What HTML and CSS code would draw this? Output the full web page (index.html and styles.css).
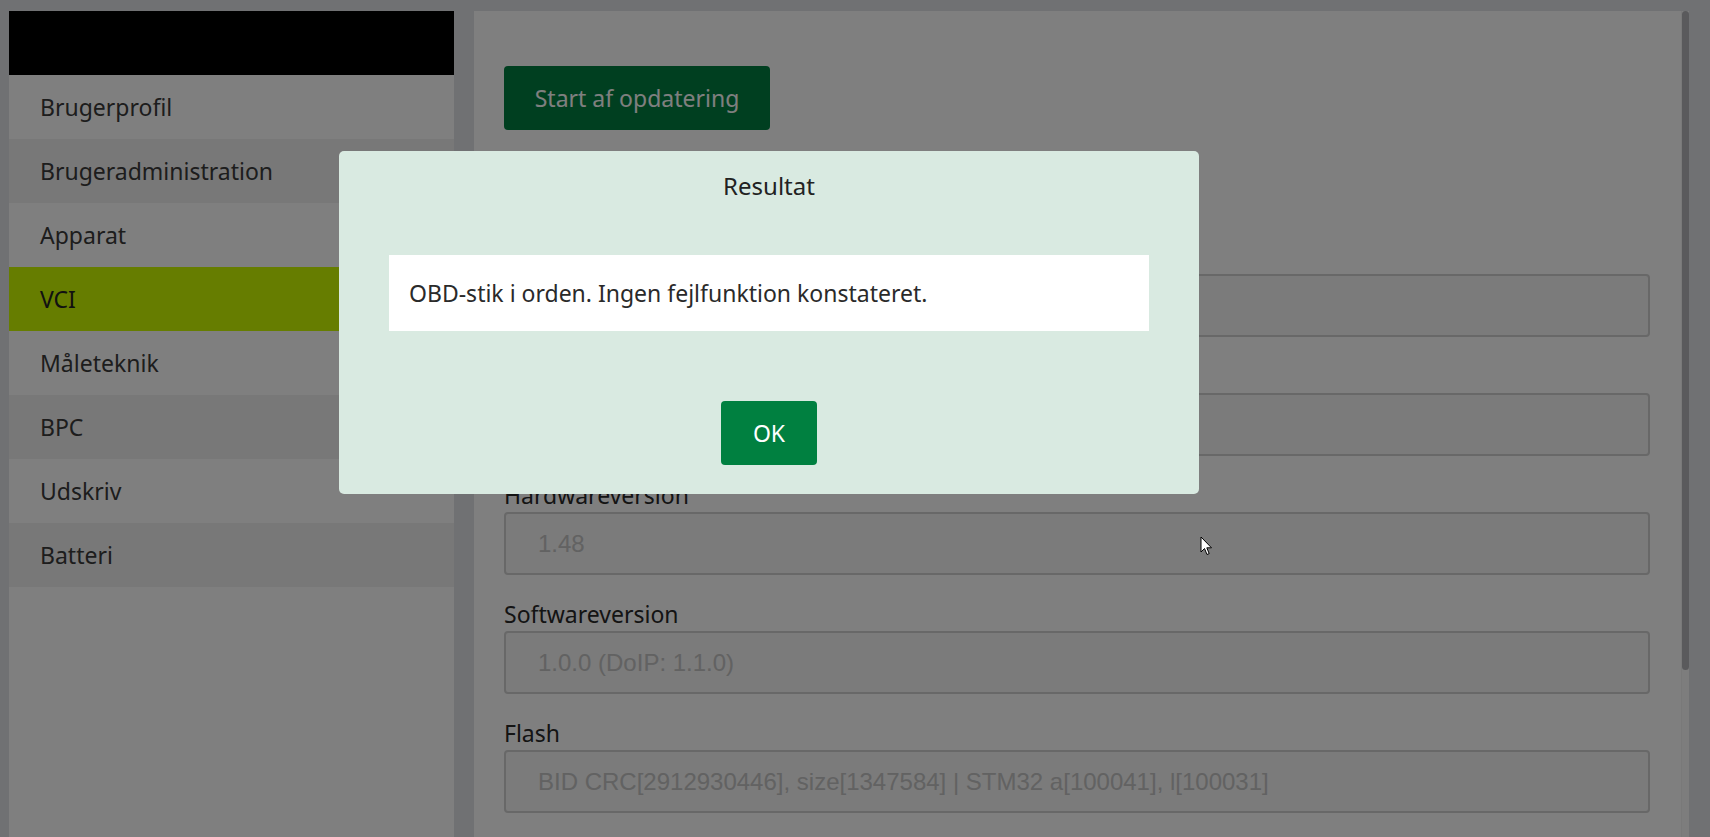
FILE: index.html
```html
<!DOCTYPE html>
<html lang="da">
<head>
    <meta charset="UTF-8">
    <meta name="viewport" content="width=device-width, initial-scale=1.0">
    <title>VCI</title>
    <link rel="stylesheet" href="styles.css">
</head>
<body>
<div class="app">
    <aside class="sidebar">
        <div class="brand"></div>
        <nav class="menu">
            <a class="menu-item">Brugerprofil</a>
            <a class="menu-item">Brugeradministration</a>
            <a class="menu-item">Apparat</a>
            <a class="menu-item active">VCI</a>
            <a class="menu-item">Måleteknik</a>
            <a class="menu-item">BPC</a>
            <a class="menu-item">Udskriv</a>
            <a class="menu-item">Batteri</a>
        </nav>
    </aside>

    <main class="content">
        <div class="content-inner">
            <button class="btn btn-update">Start af opdatering</button>

            <div class="fields">
                <div class="form-group">
                    <label for="vci_name">Navn</label>
                    <input type="text" id="vci_name" value="" disabled>
                </div>
                <div class="form-group">
                    <label for="vci_serial">Serienummer</label>
                    <input type="text" id="vci_serial" value="" disabled>
                </div>
                <div class="form-group">
                    <label for="vci_hw">Hardwareversion</label>
                    <input type="text" id="vci_hw" value="1.48" disabled>
                </div>
                <div class="form-group">
                    <label for="vci_sw">Softwareversion</label>
                    <input type="text" id="vci_sw" value="1.0.0 (DoIP: 1.1.0)" disabled>
                </div>
                <div class="form-group">
                    <label for="vci_flash">Flash</label>
                    <input type="text" id="vci_flash" value="BID CRC[2912930446], size[1347584] | STM32 a[100041], l[100031]" disabled>
                </div>
            </div>
        </div>
        <div class="scrollbar">
            <div class="scrollbar-thumb"></div>
        </div>
    </main>
</div>

<!-- dialog -->
<div class="overlay">
    <div class="dialog">
        <h2 class="dialog-title">Resultat</h2>
        <div class="dialog-message">OBD-stik i orden. Ingen fejlfunktion konstateret.</div>
        <div class="dialog-actions">
            <button class="btn btn-ok">OK</button>
        </div>
    </div>
</div>

<svg class="cursor" width="13" height="20" viewBox="0 0 13 20">
    <path d="M1 1 L1 16 L4.5 12.5 L7 18.5 L9.2 17.6 L6.8 11.8 L11.5 11.8 Z" fill="#fff" stroke="#000" stroke-width="1"/>
</svg>
</body>
</html>
```

FILE: styles.css
```css
/* 全局样式 */
body {
    margin: 0;
    padding: 0;
    background: #e0e2e6;
    font-family: 'Noto Sans', 'Open Sans', sans-serif;
    color: #333;
    height: 100vh;
    overflow: hidden;
}

.app {
    display: flex;
    gap: 20px;
    height: 100vh;
    box-sizing: border-box;
    padding: 11px 21px 0 9px;
}

/* 左侧菜单 */
.sidebar {
    width: 445px;
    flex-shrink: 0;
    background: #fff;
}

.brand {
    height: 64px;
    background: #000;
}

.menu {
    display: flex;
    flex-direction: column;
}

.menu-item {
    display: flex;
    align-items: center;
    height: 64px;
    padding-left: 31px;
    font-size: 23px;
    color: #3a3a3a;
    text-decoration: none;
}

.menu-item:nth-child(even) {
    background: #f0f0f0;
}

.menu-item.active {
    background: #ccfa00;
    color: #222;
}

/* 内容区 */
.content {
    flex: 1;
    display: flex;
    background: #fff;
    overflow: hidden;
}

.content-inner {
    flex: 1;
    padding: 55px 31px 0 30px;
}

.scrollbar {
    width: 8px;
    flex-shrink: 0;
    background: #fafafa;
    border-left: 1px solid #f2f2f2;
    box-sizing: border-box;
}

.scrollbar-thumb {
    height: 659px;
    background: #b4b4b8;
    border-radius: 4px;
}

.btn {
    border: none;
    border-radius: 4px;
    color: #fff;
    font-family: 'Noto Sans', 'Open Sans', sans-serif;
    font-size: 23px;
    cursor: pointer;
}

.btn-update {
    width: 266px;
    height: 64px;
    background: #007e40;
}

.fields {
    margin-top: 112px;
}

.form-group {
    margin-bottom: 24px;
}

label {
    display: block;
    font-size: 23px;
    line-height: 30px;
    margin-bottom: 2px;
    color: #282828;
}

input[type="text"] {
    display: block;
    width: 100%;
    height: 63px;
    box-sizing: border-box;
    padding: 0 32px;
    border: 2px solid #d0d0d0;
    border-radius: 4px;
    background: #f6f6f6;
    color: #c4c4c4;
    font-family: 'Liberation Sans', Arial, sans-serif;
    font-size: 24px;
}

/* 弹窗 */
.overlay {
    position: fixed;
    inset: 0;
    background: rgba(0, 0, 0, 0.5);
}

.dialog {
    position: absolute;
    left: 339px;
    top: 151px;
    width: 860px;
    box-sizing: border-box;
    padding: 19px 50px 29px;
    background: #d9eae1;
    border-radius: 5px;
}

.dialog-title {
    margin: 0;
    font-size: 24px;
    font-weight: normal;
    line-height: 32px;
    text-align: center;
    color: #222;
}

.dialog-message {
    margin-top: 53px;
    padding: 23px 20px;
    background: #fff;
    font-size: 23px;
    line-height: 30px;
    color: #2a2a2a;
}

.dialog-actions {
    display: flex;
    justify-content: center;
    margin-top: 70px;
}

.btn-ok {
    width: 96px;
    height: 64px;
    background: #008040;
}

.cursor {
    position: fixed;
    left: 1200px;
    top: 536px;
}
```
